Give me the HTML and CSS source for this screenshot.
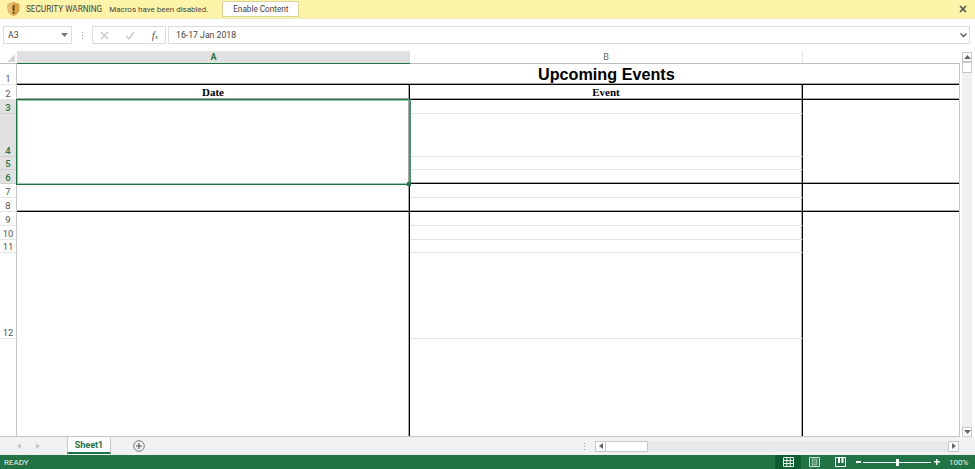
FILE: index.html
```html
<!DOCTYPE html>
<html lang="en">
<head>
<meta charset="utf-8">
<title>Upcoming Events</title>
<link rel="stylesheet" href="styles.css">
</head>
<body>
<div class="app">
  <div class="warning">
    <svg class="shield" width="13" height="14" viewBox="0 0 14 15"><path d="M7 .5 13 2.500V7.500C13 11 10.500 13.500 7 14.500 3.500 13.500 1 11 1 7.500V2.500Z" fill="#d9a441" stroke="#c9a25a"/><path d="M7 .5V14.500C3.500 13.500 1 11 1 7.500V2.500Z" fill="#e8bd6b"/><rect x="6" y="3.500" width="2" height="6" fill="#5b3d12"/><rect x="6" y="10.500" width="2" height="2" fill="#5b3d12"/></svg>
    <span class="warn-title">SECURITY WARNING</span>
    <span class="warn-msg">Macros have been disabled.</span>
    <span class="warn-btn">Enable Content</span>
    <svg class="warn-close" width="8" height="8" viewBox="0 0 8 8"><path d="M1 1 7 7M7 1 1 7" stroke="#555" stroke-width="1.700"/></svg>
  </div>

  <div class="formula">
    <div class="namebox"><span>A3</span><svg width="7" height="4" viewBox="0 0 7 4"><path d="M0 0H7L3.500 4Z" fill="#777"/></svg></div>
    <div class="vdots"><i></i><i></i><i></i></div>
    <div class="fbtns">
      <svg width="9" height="9" viewBox="0 0 9 9"><path d="M1 1 8 8M8 1 1 8" stroke="#c6c6c6" stroke-width="1.300"/></svg>
      <svg width="10" height="9" viewBox="0 0 10 9"><path d="M1 5 4 8 9 1" fill="none" stroke="#c6c6c6" stroke-width="1.300"/></svg>
      <span class="fx">f<small>x</small></span>
    </div>
    <div class="finput"><span>16-17 Jan 2018</span><svg width="7" height="5" viewBox="0 0 7 5"><path d="M.5 .5 3.500 3.500 6.500 .5" fill="none" stroke="#555" stroke-width="1.300"/></svg></div>
  </div>

  <div class="colhead">
    <div class="corner"><svg width="8" height="8" viewBox="0 0 8 8"><path d="M8 0V8H0Z" fill="#d4d4d4"/></svg></div>
    <div class="ch ch-active">A</div>
    <div class="ch">B</div>
    <div class="ch-rest"></div>
  </div>

  <div class="main">
    <div class="sheet">
      <div class="rh r1">1</div>
      <div class="title">Upcoming Events</div>

      <div class="rh r2">2</div>
      <div class="c c-a r2 head k">Date</div>
      <div class="c c-b r2 head k">Event</div>
      <div class="c c-c r2 k"></div>

      <div class="rh rh-on r3">3</div>
      <div class="rh rh-on r4">4</div>
      <div class="rh rh-on r5">5</div>
      <div class="rh rh-on r6">6</div>
      <div class="c c-a r3-6"></div>
      <div class="c c-b r3 g"></div>
      <div class="c c-b r4 g"></div>
      <div class="c c-b r5 g"></div>
      <div class="c c-b r6 k"></div>
      <div class="c c-c r3-6 k"></div>
      <div class="selection"><i class="handle"></i></div>

      <div class="rh r7">7</div>
      <div class="rh r8">8</div>
      <div class="c c-a r7-8 k"></div>
      <div class="c c-b r7 g"></div>
      <div class="c c-b r8 k"></div>
      <div class="c c-c r7-8 k"></div>

      <div class="rh r9">9</div>
      <div class="rh r10">10</div>
      <div class="rh r11">11</div>
      <div class="rh r12">12</div>
      <div class="rh r13"></div>
      <div class="c c-a r9-13"></div>
      <div class="c c-b r9 g"></div>
      <div class="c c-b r10 g"></div>
      <div class="c c-b r11 g"></div>
      <div class="c c-b r12 g"></div>
      <div class="c c-b r13"></div>
      <div class="c c-c r9-13"></div>
    </div>
    <div class="vscroll">
      <div class="sbtn"><svg width="7" height="4" viewBox="0 0 7 4"><path d="M3.500 0 7 4H0Z" fill="#666"/></svg></div>
      <div class="vthumb"></div>
      <div class="spacer"></div>
      <div class="sbtn"><svg width="7" height="4" viewBox="0 0 7 4"><path d="M0 0H7L3.500 4Z" fill="#666"/></svg></div>
    </div>
  </div>

  <div class="tabs">
    <div class="navs">
      <svg width="4" height="6" viewBox="0 0 4 6"><path d="M4 0V6L0 3Z" fill="#c8c8c8"/></svg>
      <svg width="4" height="6" viewBox="0 0 4 6"><path d="M0 0V6L4 3Z" fill="#c8c8c8"/></svg>
    </div>
    <div class="tab">Sheet1</div>
    <svg class="addsheet" width="12" height="12" viewBox="0 0 12 12"><circle cx="6" cy="6" r="5.300" fill="none" stroke="#777"/><path d="M6 3V9M3 6H9" stroke="#555" stroke-width="1.200"/></svg>
    <div class="vdots tabdots"><i></i><i></i><i></i></div>
    <div class="hscroll">
      <div class="hbtn"><svg width="4" height="6" viewBox="0 0 4 6"><path d="M4 0V6L0 3Z" fill="#666"/></svg></div>
      <div class="hthumb"></div>
      <div class="spacer"></div>
      <div class="hbtn"><svg width="4" height="6" viewBox="0 0 4 6"><path d="M0 0V6L4 3Z" fill="#666"/></svg></div>
    </div>
  </div>

  <div class="status">
    <span class="ready">READY</span>
    <div class="view view-on"><svg width="11" height="10" viewBox="0 0 11 10"><path d="M.5 .5H10.500V9.500H.5ZM.5 3.500H10.500M.5 6.500H10.500M3.800 .5V9.500M7.200 .5V9.500" fill="none" stroke="#e4efe8"/></svg></div>
    <div class="view"><svg width="11" height="10" viewBox="0 0 11 10"><path d="M.5 .5H10.500V9.500H.5Z" fill="none" stroke="#cfe0d6"/><path d="M3 2H8V8H3Z" fill="#5f9a7c" stroke="#cfe0d6" stroke-width=".6"/></svg></div>
    <div class="view"><svg width="11" height="10" viewBox="0 0 11 10"><path d="M.5 .5H10.500V9.500H.5Z" fill="none" stroke="#fff"/><path d="M3 0V6H5V0ZM6.500 0V6H8.500V0Z" fill="#fff"/></svg></div>
    <div class="zoom">
      <span class="zm"></span>
      <div class="slider"><i></i></div>
      <span class="zp"></span>
    </div>
    <span class="pct">100%</span>
  </div>
</div>
</body>
</html>
```

FILE: styles.css
```css
* { box-sizing: border-box; }
html, body { margin: 0; padding: 0; background: #fff; }
body { font-family: Roboto, "Open Sans", sans-serif; color: #444; }
.app { width: 975px; height: 469px; display: flex; flex-direction: column; overflow: hidden; }
svg { display: block; flex: none; }

.warning { height: 19px; background: #fdf4a9; border-bottom: 1px solid #f0e9b4; display: flex; align-items: center; padding: 0 8px 0 7px; color: #444; font-size: 8.200px; }
.shield { margin-right: 6px; }
.warn-title { margin-right: 7px; }
.warn-msg { font-size: 8px; }
.warn-btn { margin-left: 14px; width: 77px; height: 16px; background: #fff; border: 1px solid #d9d39c; font-size: 8.200px; display: flex; align-items: center; justify-content: center; }
.warn-close { margin-left: auto; }

.formula { height: 32px; background: #fff; display: flex; align-items: center; padding: 0 5px 0 3px; font-size: 8.700px; color: #444; }
.namebox { width: 69px; height: 18px; border: 1px solid #dcdcdc; display: flex; align-items: center; justify-content: space-between; padding: 0 3px 0 4px; }
.vdots { display: flex; flex-direction: column; gap: 2px; width: 2px; }
.vdots i { display: block; width: 1px; height: 1px; background: #999; }
.formula .vdots { margin: 0 8px 0 10px; }
.fbtns { width: 74px; height: 18px; border: 1px solid #dcdcdc; display: flex; align-items: center; justify-content: space-between; padding: 0 7px 0 7px; }
.fx { font-family: "Liberation Serif", serif; font-style: italic; font-size: 11px; color: #555; line-height: 1; }
.fx small { font-size: 7px; }
.finput { flex: 1; margin-left: 2px; height: 18px; border: 1px solid #dcdcdc; display: flex; align-items: center; justify-content: space-between; padding: 0 2px 0 7px; }

.colhead { height: 13px; display: flex; font-size: 9px; color: #666; background: #fff; }
.corner { width: 17px; display: flex; align-items: flex-end; justify-content: flex-end; padding: 0 2px 1px 0; border-bottom: 1px solid #bdbdbd; }
.ch { width: 393px; display: flex; align-items: center; justify-content: center; border-right: 1px solid #e4e4e4; border-bottom: 1px solid #bdbdbd; }
.ch-active { background: #e1e1e1; color: #217346; font-weight: 700; border-right: 0; border-bottom: 1px solid #217346; }
.ch-rest { width: 157px; border-bottom: 1px solid #bdbdbd; }

.main { height: 373px; display: flex; }
.sheet { width: 960px; display: grid; grid-template-columns: 17px 393px 393px 1fr;
  grid-template-rows: 21px 15px 14px 43px 13px 14px 14px 14px 14px 14px 13px 86px 1fr;
  border-right: 1px solid #c6c6c6; border-bottom: 1px solid #c6c6c6; overflow: hidden; }
.rh { grid-column: 1; border-right: 1px solid #c6c6c6; border-bottom: 1px solid #e6e6e6; font-size: 9.500px; color: #555; display: flex; align-items: flex-end; justify-content: center; line-height: 10px; }
.rh-on { background: #e1e1e1; color: #217346; font-weight: 500; border-right-color: #217346; border-bottom-color: #cfcfcf; }
.c { min-width: 0; }
.c-a, .c-b { border-right: 1px solid #000; box-shadow: inset -1px 0 0 #a8a8a8; }
.c-a { grid-column: 2; }
.c-b { grid-column: 3; }
.c-c { grid-column: 4; }
.g { border-bottom: 1px solid #e3e3e3; }
.k { border-bottom: 1px solid #000; box-shadow: inset 0 -1px 0 #a8a8a8; }
.c-a.k, .c-b.k { box-shadow: inset -1px 0 0 #a8a8a8, inset 0 -1px 0 #a8a8a8; }
.head { font-family: "Liberation Serif", serif; font-weight: 700; font-size: 11px; color: #000; display: flex; align-items: center; justify-content: center; }
.title { grid-column: 2 / 5; grid-row: 1; border-bottom: 1px solid #000; box-shadow: inset 0 -1px 0 #a8a8a8; font-family: "Liberation Sans", sans-serif; font-weight: 700; font-size: 16.200px; color: #000; line-height: 20px; padding-left: 521px; }

.r1 { grid-row: 1; } .r2 { grid-row: 2; } .r3 { grid-row: 3; } .r4 { grid-row: 4; } .r5 { grid-row: 5; } .r6 { grid-row: 6; }
.r7 { grid-row: 7; } .r8 { grid-row: 8; } .r9 { grid-row: 9; } .r10 { grid-row: 10; } .r11 { grid-row: 11; } .r12 { grid-row: 12; } .r13 { grid-row: 13; border-bottom: 0; }
.r3-6 { grid-row: 3 / 7; } .r7-8 { grid-row: 7 / 9; } .r9-13 { grid-row: 9 / 14; }

.selection { grid-column: 2; grid-row: 3 / 7; border-style: solid; border-color: #217346; border-width: 1px 2px 1px 1px; border-right-color: #4a9472; box-shadow: inset 0 1px 0 #9cc7b0, inset 1px 0 0 #9cc7b0, inset 0 -1px 0 #9cc7b0; margin: -1px; position: relative; z-index: 2; }
.handle { position: absolute; right: -2px; bottom: -2px; width: 4px; height: 4px; background: #217346; }

.vscroll { width: 15px; margin-top: -12px; padding: 0 3px 0 2px; display: flex; flex-direction: column; background: #fff; position: relative; }
.sbtn { height: 10px; border: 1px solid #c8c8c8; background: #fff; display: flex; align-items: center; justify-content: center; flex: none; }
.vthumb { height: 11px; border: 1px solid #c8c8c8; background: #fff; flex: none; }
.spacer { flex: 1; background: #f0f0f0; }

.tabs { height: 18px; background: #f1f1f1; display: flex; align-items: center; }
.navs { width: 67px; display: flex; gap: 15px; padding-left: 17px; }
.tab { width: 44px; height: 17px; margin-top: -1px; background: #fff; border: 1px solid #c8c8c8; border-top: 0; border-bottom: 2px solid #217346; color: #217346; font-weight: 700; font-size: 9px; display: flex; align-items: center; justify-content: center; }
.addsheet { margin-left: 22px; }
.tabdots { margin-left: 439px; }
.hscroll { margin-left: 9px; width: 364px; height: 11px; display: flex; background: #e9e9e9; }
.hscroll .spacer { background: #e9e9e9; }
.hbtn { width: 11px; background: #fff; border: 1px solid #c8c8c8; display: flex; align-items: center; justify-content: center; }
.hthumb { width: 42px; background: #fff; border: 1px solid #c8c8c8; border-left: 0; }

.status { flex: 1; background: #217346; display: flex; align-items: center; color: #e8f2ec; font-size: 8px; }
.ready { margin-left: 4px; margin-right: auto; }
.view { width: 26px; height: 100%; display: flex; align-items: center; justify-content: center; }
.view-on { background: #0f5c30; }
.zoom { display: flex; align-items: center; margin-left: 3px; }
.zm { width: 5px; height: 1.500px; background: #fff; }
.slider { width: 68px; height: 1px; background: #fff; margin: 0 3px 0 2px; display: flex; justify-content: center; }
.slider i { display: block; width: 3px; height: 7px; margin-top: -3px; background: #fff; }
.zp { width: 6px; height: 6px; background: linear-gradient(#fff, #fff) center / 6px 1.500px no-repeat, linear-gradient(#fff, #fff) center / 1.500px 6px no-repeat; }
.pct { margin-left: 9px; margin-right: 7px; width: 19px; white-space: nowrap; }
```
